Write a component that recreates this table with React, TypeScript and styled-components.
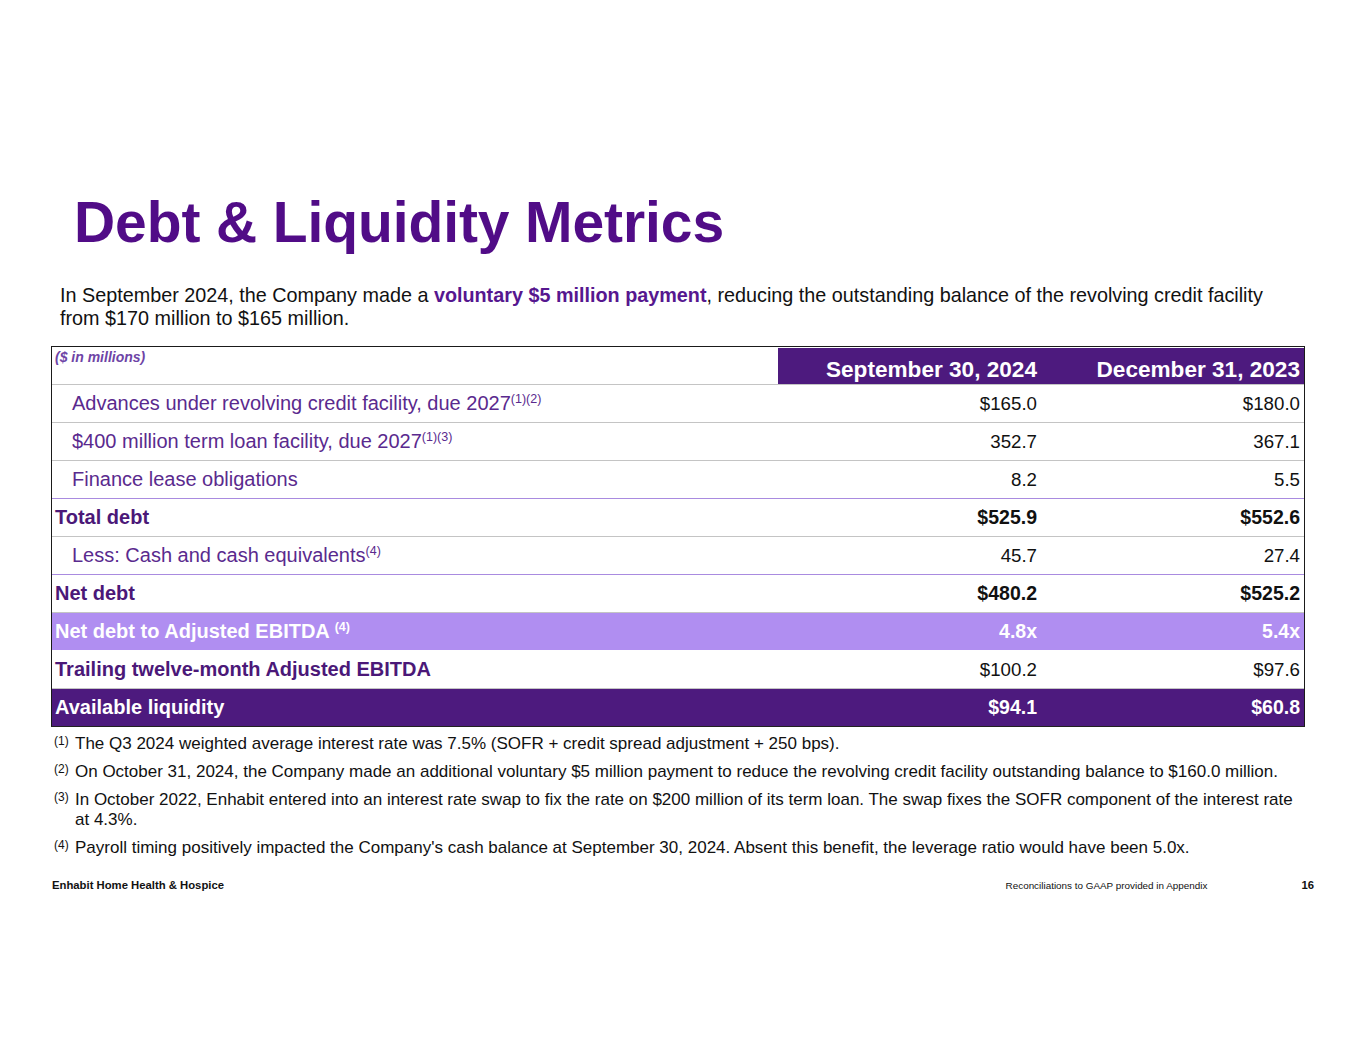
import React from "react";
import styled, { createGlobalStyle, css } from "styled-components";

const Global = createGlobalStyle`
  html, body { margin: 0; padding: 0; background: #ffffff; }
  body { font-family: "Liberation Sans", Arial, sans-serif; color: #111; }
`;

const Slide = styled.div`
  width: 1365px;
  height: 1055px;
  box-sizing: border-box;
  padding-top: 194px;
  display: flex;
  flex-direction: column;
  background: #fff;
`;

const Title = styled.h1`
  margin: 0 0 0 74px;
  font-size: 57px;
  line-height: 57px;
  font-weight: 700;
  color: #510c87;
  letter-spacing: -0.1px;
`;

const Intro = styled.p`
  margin: 33px 0 0 60px;
  width: 1225px;
  font-size: 19.8px;
  line-height: 23px;
  color: #111;
`;

const Emph = styled.strong`
  color: #56178f;
  font-weight: 700;
`;

const Table = styled.div`
  margin: 16px 0 0 51px;
  width: 1254px;
  box-sizing: border-box;
  border: 1px solid #1a1a1a;
  border-bottom-color: #222;
`;

type Tone = "plain" | "highlight" | "dark";
type Line = "none" | "gray" | "purple";

const lineColor: Record<Line, string> = {
  none: "transparent",
  gray: "#c4c4c4",
  purple: "#a98be0",
};

const Row = styled.div<{ $tone?: Tone; $line?: Line }>`
  display: grid;
  grid-template-columns: 1fr 263px 263px;
  height: 38px;
  box-sizing: border-box;
  border-top: 1px solid ${(p) => lineColor[p.$line ?? "gray"]};
  align-items: center;
  ${(p) =>
    p.$tone === "highlight" &&
    css`
      background: #b08ef1;
      color: #fff;
    `}
  ${(p) =>
    p.$tone === "dark" &&
    css`
      background: #4d1a7e;
      color: #fff;
    `}
`;

const HeaderRow = styled.div`
  display: grid;
  grid-template-columns: 1fr 263px 263px;
  height: 37px;
`;

const Units = styled.div`
  padding: 2px 0 0 3px;
  font-size: 14px;
  font-style: italic;
  font-weight: 700;
  color: #6e44a6;
`;

const DateHead = styled.div`
  background: #4d1a7e;
  color: #fff;
  font-weight: 700;
  font-size: 22.6px;
  display: flex;
  align-items: flex-end;
  justify-content: flex-end;
  padding: 0 4px 1px 0;
  margin-top: 1px;
`;

const Label = styled.div<{ $indent?: boolean; $bold?: boolean; $light?: boolean }>`
  padding-left: ${(p) => (p.$indent ? "20px" : "3px")};
  font-size: 20px;
  font-weight: ${(p) => (p.$bold ? 700 : 400)};
  color: ${(p) => (p.$light ? "#fff" : p.$bold ? "#4b1878" : "#5a2a8e")};
  white-space: nowrap;
`;

const Value = styled.div<{ $bold?: boolean }>`
  text-align: right;
  padding-right: 4px;
  font-size: ${(p) => (p.$bold ? "19.5px" : "18.7px")};
  font-weight: ${(p) => (p.$bold ? 700 : 400)};
`;

const Sup = styled.sup`
  font-size: 12.5px;
  line-height: 0;
  vertical-align: 0.6em;
`;

const Notes = styled.div`
  margin: 7px 0 0 52px;
  width: 1255px;
  display: flex;
  flex-direction: column;
  gap: 8px;
`;

const Note = styled.div`
  display: grid;
  grid-template-columns: 23px 1fr;
  font-size: 17px;
  line-height: 20px;
  color: #111;
`;

const NoteMark = styled.span`
  font-size: 12px;
  line-height: 14px;
  padding-left: 2px;
`;

const Footer = styled.div`
  margin: 21px 0 0 52px;
  padding-right: 51px;
  display: flex;
  align-items: center;
  font-size: 11.3px;
  line-height: 13px;
`;

const FooterBrand = styled.span`
  flex: 1;
  font-weight: 700;
`;

const FooterNote = styled.span`
  font-size: 9.9px;
  margin-right: 94px;
`;

const PageNum = styled.span`
  font-weight: 700;
`;

type RowData = {
  label: React.ReactNode;
  sep: string;
  dec: string;
  indent?: boolean;
  bold?: boolean;
  tone?: Tone;
  line?: Line;
};

const rows: RowData[] = [
  { label: <>Advances under revolving credit facility, due 2027<Sup>(1)(2)</Sup></>, sep: "$165.0", dec: "$180.0", indent: true, line: "gray" },
  { label: <>$400 million term loan facility, due 2027<Sup>(1)(3)</Sup></>, sep: "352.7", dec: "367.1", indent: true, line: "gray" },
  { label: "Finance lease obligations", sep: "8.2", dec: "5.5", indent: true, line: "gray" },
  { label: "Total debt", sep: "$525.9", dec: "$552.6", bold: true, line: "purple" },
  { label: <>Less: Cash and cash equivalents<Sup>(4)</Sup></>, sep: "45.7", dec: "27.4", indent: true, line: "gray" },
  { label: "Net debt", sep: "$480.2", dec: "$525.2", bold: true, line: "purple" },
  { label: <>Net debt to Adjusted EBITDA <Sup>(4)</Sup></>, sep: "4.8x", dec: "5.4x", bold: true, tone: "highlight", line: "gray" },
  { label: "Trailing twelve-month Adjusted EBITDA", sep: "$100.2", dec: "$97.6", bold: true, line: "none" },
  { label: "Available liquidity", sep: "$94.1", dec: "$60.8", bold: true, tone: "dark", line: "gray" },
];

const boldValueRows = new Set(["Total debt", "Net debt", "Available liquidity", "ratio"]);

const notes: { mark: string; text: string }[] = [
  { mark: "(1)", text: "The Q3 2024 weighted average interest rate was 7.5% (SOFR + credit spread adjustment + 250 bps)." },
  { mark: "(2)", text: "On October 31, 2024, the Company made an additional voluntary $5 million payment to reduce the revolving credit facility outstanding balance to $160.0 million." },
  { mark: "(3)", text: "In October 2022, Enhabit entered into an interest rate swap to fix the rate on $200 million of its term loan. The swap fixes the SOFR component of the interest rate at 4.3%." },
  { mark: "(4)", text: "Payroll timing positively impacted the Company's cash balance at September 30, 2024. Absent this benefit, the leverage ratio would have been 5.0x." },
];

export default function App() {
  return (
    <>
      <Global />
      <Slide>
        <Title>Debt &amp; Liquidity Metrics</Title>
        <Intro>
          In September 2024, the Company made a <Emph>voluntary $5 million payment</Emph>, reducing the outstanding
          balance of the revolving credit facility from $170 million to $165 million.
        </Intro>
        <Table>
          <HeaderRow>
            <Units>($ in millions)</Units>
            <DateHead>September 30, 2024</DateHead>
            <DateHead>December 31, 2023</DateHead>
          </HeaderRow>
          {rows.map((r, i) => {
            const light = r.tone === "highlight" || r.tone === "dark";
            const boldVal =
              typeof r.label === "string"
                ? boldValueRows.has(r.label)
                : r.tone === "highlight";
            return (
              <Row key={i} $tone={r.tone} $line={r.line}>
                <Label $indent={r.indent} $bold={r.bold} $light={light}>
                  {r.label}
                </Label>
                <Value $bold={boldVal}>{r.sep}</Value>
                <Value $bold={boldVal}>{r.dec}</Value>
              </Row>
            );
          })}
        </Table>
        <Notes>
          {notes.map((n) => (
            <Note key={n.mark}>
              <NoteMark>{n.mark}</NoteMark>
              <span>{n.text}</span>
            </Note>
          ))}
        </Notes>
        <Footer>
          <FooterBrand>Enhabit Home Health &amp; Hospice</FooterBrand>
          <FooterNote>Reconciliations to GAAP provided in Appendix</FooterNote>
          <PageNum>16</PageNum>
        </Footer>
      </Slide>
    </>
  );
}
